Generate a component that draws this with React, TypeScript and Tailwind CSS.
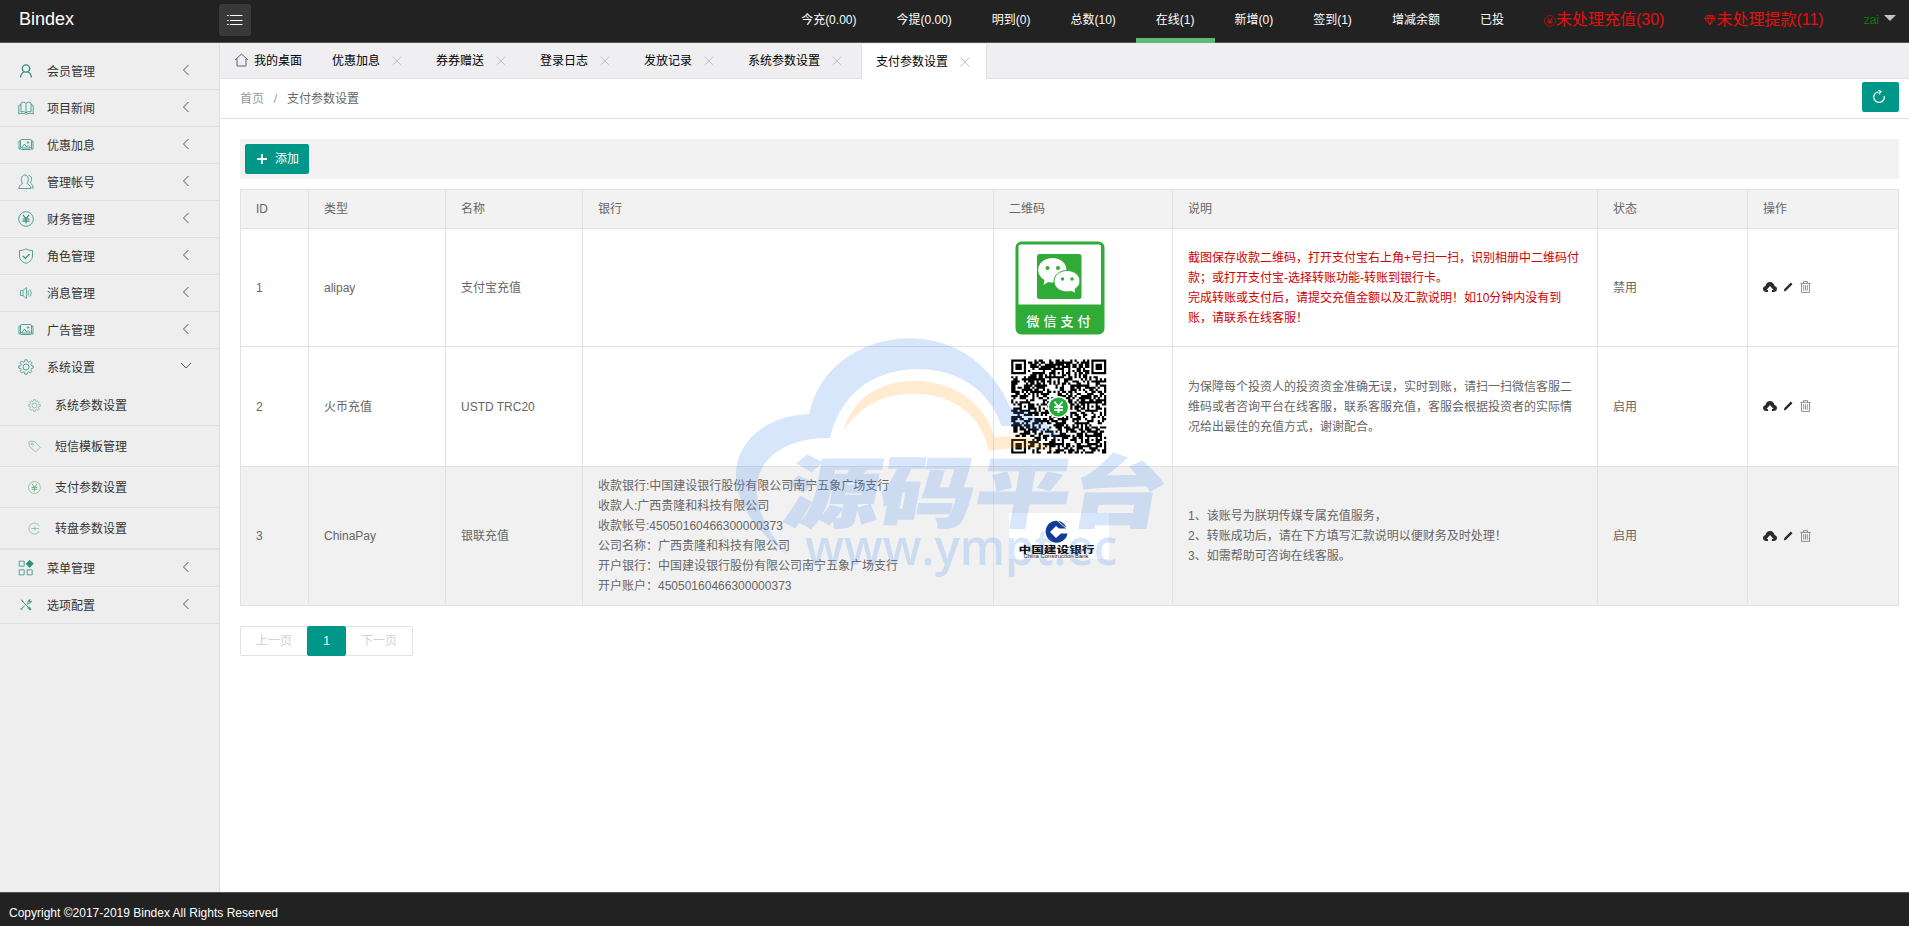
import type { ReactNode } from 'react';

const stats = [
    '今充(0.00)',
    '今提(0.00)',
    '明到(0)',
    '总数(10)',
    '在线(1)',
    '新增(0)',
    '签到(1)',
    '增减余额',
    '已投',
];

const gear = (
    <>
        <path d="M6.9.8h2.2l.4 1.9 1.2.5 1.7-1.1 1.5 1.5-1.1 1.7.5 1.2 1.9.4v2.2l-1.9.4-.5 1.2 1.1 1.7-1.5 1.5-1.7-1.1-1.2.5-.4 1.9H6.9l-.4-1.9-1.2-.5-1.7 1.1-1.5-1.5 1.1-1.7-.5-1.2-1.9-.4V6.9l1.9-.4.5-1.2-1.1-1.7 1.5-1.5 1.7 1.1 1.2-.5z" />
        <circle cx="8" cy="8" r="3" />
    </>
);

const picture = (
    <>
        <rect x="2.5" y="2.5" width="11" height="10" rx="1" />
        <path d="M2.5 4H1v8h1.500M13.500 4H15v8h-1.500M3.500 11l3-4 2 3 1.500-1.500 2.500 2.500z" />
        <circle cx="10" cy="5.500" r=".8" />
    </>
);

const yen = (
    <>
        <circle cx="8" cy="8" r="7.300" />
        <path d="M5 3.800l3 4 3-4M4.500 8h7M4.500 10.200h7M8 8v4.500" strokeWidth="1.200" />
    </>
);

const icons: Record<string, ReactNode> = {
    user: (
        <>
            <circle cx="8" cy="5.500" r="3.700" strokeWidth="1.300" />
            <path d="M2.500 14.500c.3-3 1.700-4.800 3.500-5.500M13.500 14.500c-.3-3-1.700-4.800-3.500-5.500" strokeWidth="1.300" />
        </>
    ),
    book: (
        <path d="M8 3.500v9.500M8 3.500C7 2 4 1.800 3 3v9c1.500-.8 4-.6 5 1 1-1.600 3.500-1.800 5-1V3c-1-1.200-4-1-5 .5M3 4.500L.8 5.500v8.500c2-1 5.500-.8 7.200.3 1.700-1.100 5.200-1.300 7.200-.3V5.500L13 4.500" />
    ),
    picture,
    group: (
        <>
            <path d="M4.500 9.200C2.500 7 3 1 6.800 1s4.500 6 2.300 8.200c0 1.200 3.900 1.600 3.900 5.300H.8c0-3.700 3.700-4.100 3.700-5.300z" />
            <path d="M10.500 1.500c3.300-.2 4 5 1.900 7.200 0 1.200 2.800 1.600 2.800 5.300h-1.500" />
        </>
    ),
    yen,
    shield: (
        <>
            <path d="M8 .8c2 1.300 4.200 1.700 6.500 1.700v5.500c0 3.500-2.500 6-6.500 7.300-4-1.300-6.500-3.800-6.500-7.300V2.500C3.800 2.500 6 2.100 8 .8z" />
            <path d="M4.800 7.800l2.500 2.500 4.200-4.300" strokeWidth="1.200" />
        </>
    ),
    sound: (
        <path d="M2.500 5.500h2.500l3.500-3v11l-3.500-3H2.500zM5 5.500v5M10.300 5.500v5M11.800 4.300c1.800 1.700 1.800 5.700 0 7.400" strokeWidth=".7" />
    ),
    gear,
    tag: (
        <>
            <path d="M1 2.500L2 1.500l6 .3 7 7.200-5.500 5.800L2 8z" />
            <circle cx="5" cy="5" r="1.300" />
        </>
    ),
    turn: (
        <path d="M14 5A6.800 6.800 0 1 0 14 11M4 8h9.500M8.500 5.500v5" />
    ),
    menu: (
        <>
            <path d="M1.200 1.200h5v5h-5zM1.200 9.800h5v5h-5zM9.200 9.800h5v5h-5z" />
            <path d="M11.700.2l3.600 3.600-3.600 3.600-3.600-3.600z" fill="currentColor" />
        </>
    ),
    tools: (
        <path
            d="M2.500 2.500l11 11M2 13.500l4.500-4.500M9 6.500l2-2c-.5-1.500.5-3 2.200-3l-1.200 1.700 1.200 1.200 1.600-1.200c0 1.800-1.400 2.800-3 2.300L10 7.500M2.500 1.500l2.500 3M1.500 12l2 2.500M10 11.500l3 3 1.500-1.500-3-3"
            transform="translate(1.500 1.500) scale(.8)"
            strokeWidth="1.200"
        />
    ),
};

function Icon({ name, className }: { name: string; className: string }) {
    return (
        <svg viewBox="0 0 16 16" className={className} fill="none" stroke="currentColor" strokeWidth="0.8">
            {icons[name]}
        </svg>
    );
}

const menu = [
    { icon: 'user', label: '会员管理' },
    { icon: 'book', label: '项目新闻' },
    { icon: 'picture', label: '优惠加息' },
    { icon: 'group', label: '管理帐号' },
    { icon: 'yen', label: '财务管理' },
    { icon: 'shield', label: '角色管理' },
    { icon: 'sound', label: '消息管理' },
    { icon: 'picture', label: '广告管理' },
    {
        icon: 'gear',
        label: '系统设置',
        children: [
            { icon: 'gear', label: '系统参数设置' },
            { icon: 'tag', label: '短信模板管理' },
            { icon: 'yen', label: '支付参数设置' },
            { icon: 'turn', label: '转盘参数设置' },
        ],
    },
    { icon: 'menu', label: '菜单管理' },
    { icon: 'tools', label: '选项配置' },
];

const tabs = ['优惠加息', '券券赠送', '登录日志', '发放记录', '系统参数设置', '支付参数设置'];

// Version 7 code: 45 x 45 modules
const SIZE = 45;

function buildQr() {
    const inFinder = (x: number, y: number) => {
        const spots = [[0, 0], [SIZE - 7, 0], [0, SIZE - 7]];
        for (const [fx, fy] of spots) {
            const dx = x - fx;
            const dy = y - fy;
            if (dx >= -1 && dx <= 7 && dy >= -1 && dy <= 7) {
                const ring = Math.max(Math.abs(dx - 3), Math.abs(dy - 3));
                return ring === 3 || ring <= 1;
            }
        }
        return null;
    };
    const inAlign = (x: number, y: number) => {
        for (const [ax, ay] of [[22, 6], [6, 22], [38, 22], [22, 38], [38, 38]]) {
            const ring = Math.max(Math.abs(x - ax), Math.abs(y - ay));
            if (ring <= 2) return ring !== 1;
        }
        return null;
    };
    let seed = 20190;
    let d = '';
    for (let y = 0; y < SIZE; y++) {
        for (let x = 0; x < SIZE; x++) {
            seed = (seed * 1103515245 + 12345) % 2147483648;
            const on = inFinder(x, y) ?? inAlign(x, y) ?? (seed >> 12) % 100 < 54;
            if (on) d += `M${x} ${y}h1.03v1.03h-1.03z`;
        }
    }
    return d;
}

const qrPath = buildQr();

function WechatPay() {
    return (
        <svg viewBox="0 0 100 98" className="block h-[98px] w-[100px]">
            <rect x="6.500" y="2.500" width="89" height="93" rx="6" fill="#31ab37" />
            <path d="M11.500 5.500H90a2 2 0 0 1 2 2V65.500H9.500V7.500a2 2 0 0 1 2-2z" fill="#fff" />
            <rect x="28" y="15" width="44.500" height="45" rx="2.500" fill="#31ab37" />
            <path d="M43.500 19c8 0 14 5.200 14 12s-6 12.500-14 12.500c-1.600 0-3-.2-4.300-.6L34.500 46l1-5c-3.700-2.300-6.300-5.800-6.300-10 0-6.800 6.300-12 14.300-12z" fill="#fff" />
            <path d="M58 31.500c7.300 0 13 4.600 13 10.500 0 3.400-2 6.300-5 8.200l.7 4.300-4.200-2.200c-1.400.4-2.900.6-4.500.6-7.300 0-13-4.700-13-10.700s5.700-10.700 13-10.700z" fill="#fff" stroke="#31ab37" strokeWidth="1" />
            <g fill="#31ab37">
                <circle cx="38.500" cy="29" r="2" />
                <circle cx="49" cy="29" r="2" />
                <circle cx="53.500" cy="40" r="1.700" />
                <circle cx="63" cy="40" r="1.700" />
            </g>
            <text x="17.500" y="86.500" textLength="64" fontSize="13" fontWeight="500" fill="#fff" fontFamily="'Noto Sans CJK SC', sans-serif">
                微信支付
            </text>
        </svg>
    );
}

function QrCode() {
    return (
        <svg viewBox="0 0 100 100" className="block size-[100px]">
            <path d={qrPath} transform="translate(2.200 2.500) scale(2.110 2.090)" fill="#000" />
            <circle cx="49.500" cy="50" r="11" fill="#fff" />
            <circle cx="49.500" cy="50" r="9.500" fill="#25ab37" />
            <path d="M45.500 44.800l4 5 4-5M45 50h9M45 53.200h9M49.500 50v6" stroke="#fff" strokeWidth="1.800" fill="none" />
        </svg>
    );
}

function BankLogo() {
    return (
        <svg viewBox="0 0 100 46" className="block h-[46px] w-[100px] bg-white">
            <path d="M51 8.200A11 11 0 1 0 58.500 20.500H52l-5 4.500-6-6 6-6 3 2.500h7.500a11 11 0 0 0-6.500-7.300z" fill="#123c98" />
            <path d="M48 7.500l9.500 8M53 8l5 5" stroke="#fff" strokeWidth=".9" />
            <text x="9.500" y="40" textLength="76" lengthAdjust="spacingAndGlyphs" fontSize="8.800" fontWeight="900" fill="#111" fontFamily="'Noto Sans CJK SC', sans-serif">
                中国建设银行
            </text>
            <text x="14.500" y="45" textLength="65" lengthAdjust="spacingAndGlyphs" fontSize="5.500" fill="#111" fontFamily="'Liberation Sans', sans-serif">
                China Construction Bank
            </text>
        </svg>
    );
}

const columns = [
    { title: 'ID', width: 'w-[68px]' },
    { title: '类型', width: 'w-[137px]' },
    { title: '名称', width: 'w-[137px]' },
    { title: '银行', width: 'w-[411px]' },
    { title: '二维码', width: 'w-[179px]' },
    { title: '说明', width: 'w-[425px]' },
    { title: '状态', width: 'w-[150px]' },
    { title: '操作', width: 'w-[151px]' },
];

const rows = [
    {
        id: 1,
        type: 'alipay',
        name: '支付宝充值',
        bank: [],
        code: <WechatPay />,
        note: [
            '截图保存收款二维码，打开支付宝右上角+号扫一扫，识别相册中二维码付',
            '款；或打开支付宝-选择转账功能-转账到银行卡。',
            '完成转账或支付后，请提交充值金额以及汇款说明！如10分钟内没有到',
            '账，请联系在线客服！',
        ],
        status: '禁用',
        height: 'h-[118px]',
        noteColor: 'text-[#d00000]',
    },
    {
        id: 2,
        type: '火币充值',
        name: 'USTD TRC20',
        bank: [],
        code: <QrCode />,
        note: [
            '为保障每个投资人的投资资金准确无误，实时到账，请扫一扫微信客服二',
            '维码或者咨询平台在线客服，联系客服充值，客服会根据投资者的实际情',
            '况给出最佳的充值方式，谢谢配合。',
        ],
        status: '启用',
        height: 'h-[120px]',
        noteColor: '',
    },
    {
        id: 3,
        type: 'ChinaPay',
        name: '银联充值',
        bank: [
            '收款银行:中国建设银行股份有限公司南宁五象广场支行',
            '收款人:广西贵隆和科技有限公司',
            '收款帐号:45050160466300000373',
            '公司名称：广西贵隆和科技有限公司',
            '开户银行：中国建设银行股份有限公司南宁五象广场支行',
            '开户账户：45050160466300000373',
        ],
        code: <BankLogo />,
        note: [
            '1、该账号为朕玥传媒专属充值服务，',
            '2、转账成功后，请在下方填写汇款说明以便财务及时处理！',
            '3、如需帮助可咨询在线客服。',
        ],
        status: '启用',
        height: 'h-[139px]',
        noteColor: '',
        active: true,
    },
];

function Lines({ items }: { items: string[] }) {
    return (
        <>
            {items.map((line) => (
                <p key={line} className="whitespace-nowrap">{line}</p>
            ))}
        </>
    );
}

function Actions() {
    return (
        <div className="mb-px flex items-center">
            <svg viewBox="0 0 14 10" className="h-[10px] w-[14px]" fill="#2b2b2b">
                <path d="M3.500 10C1.500 10 0 8.800 0 7c0-1.500 1-2.700 2.500-3C2.800 1.700 4.500 0 7 0s4.200 1.700 4.500 4C13 4.300 14 5.500 14 7c0 1.800-1.500 3-3.500 3H8.900V8h1.600L7 4 3.500 8H5v2z" />
            </svg>
            <svg viewBox="0 0 10 10" className="ml-[6px] size-[10px]">
                <path d="M.8 9.400l.6-2.400L7.800.6l1.700 1.600L3 8.700z" fill="#2b2b2b" />
            </svg>
            <svg viewBox="0 0 11 12" className="ml-[7px] h-[12px] w-[11px]" fill="none" stroke="#777" strokeWidth=".8">
                <path d="M.3 2.400h10.400M3.500 2.400V.6h4v1.800M1.500 2.400v9h8v-9M3.700 4.200v5.300M5.500 4.200v5.300M7.300 4.200v5.300" />
            </svg>
        </div>
    );
}

function Watermark() {
    return (
        <svg viewBox="0 0 1500 870" className="pointer-events-none absolute top-[320px] left-[700px] h-[290px] w-[500px] opacity-20">
            <path
                d="M265 705C150 620 108 540 108 460 112 355 210 285 328 282 355 145 480 55 632 55 770 56 880 140 930 262 985 272 1050 310 1088 368 1040 335 975 318 904 317 870 215 780 147 650 147 515 150 420 225 390 354 270 352 178 405 170 500 168 570 205 640 265 705z"
                fill="#4285f4"
            />
            <path
                d="M431 331C455 240 535 184 640 182 765 184 855 250 884 352 950 343 1020 355 1062 392 1000 380 930 382 866 393 845 285 760 221 640 221 545 221 480 260 431 331z"
                fill="#ff9e14"
            />
            <g fill="#4285f4" stroke="#4285f4">
                <text
                    transform="translate(242 602) skewX(-10)"
                    textLength="1142"
                    lengthAdjust="spacingAndGlyphs"
                    fontSize="232"
                    fontWeight="900"
                    strokeWidth="4"
                    fontFamily="'Noto Sans CJK SC', sans-serif"
                >
                    源码平台
                </text>
                <text x="316" y="735" textLength="936" lengthAdjust="spacingAndGlyphs" fontSize="150" fontWeight="600" strokeWidth="0" fontFamily="'Open Sans', sans-serif">
                    www.ympt.ec
                </text>
            </g>
        </svg>
    );
}

function Header() {
    return (
        <header className="flex h-[43px] shrink-0 border-b border-[#555] bg-[#222] text-white">
            <div className="w-[219px] pt-[5px] pl-[19px] text-[18px] leading-[28px]">Bindex</div>
            <button className="mt-[4px] flex size-[32px] items-center justify-center rounded-[3px] bg-[#393939]">
                <svg viewBox="0 0 16 12" className="mb-px h-[12px] w-[16px]" fill="none" stroke="#fff" strokeWidth="1">
                    <path d="M0 1.500h1.800M0 6.500h1.800M0 10.500h1.800M3 1.500h12.500M3 6.500h12.500M3 10.500h12.500" />
                </svg>
            </button>
            <nav className="ml-auto flex h-[43px] pr-[13px] text-[12px] leading-[40px]">
                {stats.map((label) => (
                    <a
                        key={label}
                        className={`h-[43px] px-5 ${label === '在线(1)' ? 'border-b-[5px] border-[#5fb878]' : ''}`}
                    >
                        {label}
                    </a>
                ))}
                <a className="flex items-center px-5 pb-[3px] text-[16px] text-[#e60f0f]">
                    <Icon name="yen" className="mt-px size-[12px]" />
                    未处理充值(30)
                </a>
                <a className="flex items-center px-5 pb-[3px] text-[16px] text-[#e60f0f]">
                    <svg viewBox="0 0 12 12" className="size-[12px]" fill="none" stroke="currentColor" strokeWidth=".9">
                        <path d="M3 1.500h6L11.500 4.500 6 10.800.5 4.500zM.5 4.500h11M3.500 4.500L6 10.500l2.500-6M3 1.500l1.500 3L6 1.500l1.500 3L9 1.500" />
                    </svg>
                    未处理提款(11)
                </a>
                <a className="flex items-center gap-[5px] pb-[3px] pl-5 text-[#0a7a0a]">
                    zai
                    <svg viewBox="0 0 12 6" className="mb-[4px] h-[6px] w-[12px]">
                        <path d="M0 0h12L6 6z" fill="#c2c2c2" />
                    </svg>
                </a>
            </nav>
        </header>
    );
}

function Sidebar() {
    return (
        <aside className="w-[220px] shrink-0 border-r border-[#dfdfdf] bg-[#eee] pt-[10px] text-[12px] text-[#333]">
            {menu.map((item) => (
                <div key={item.label} className="border-b border-[#e0e0e0]">
                    <div className="flex h-[36px] items-center pr-[28px] pl-[18px]">
                        <Icon name={item.icon} className="size-[16px] text-[#2f8f7f]" />
                        <span className="ml-[13px] pt-[2px]">{item.label}</span>
                        <svg viewBox="0 0 12 12" className="mr-[-1px] mb-[2px] ml-auto size-[12px]" fill="none" stroke="#555" strokeWidth="1">
                            <path d={item.children ? 'M1 3l5 5 5-5' : 'M8.500 1l-5 5 5 5'} />
                        </svg>
                    </div>
                    {item.children?.map((child) => (
                        <div key={child.label} className="flex h-[41px] items-center border-b border-[#e0e0e0] pl-[28px]">
                            <Icon name={child.icon} className="mt-px size-[13px] text-[#6fae8c]" />
                            <span className="ml-[14px] pt-[2px]">{child.label}</span>
                        </div>
                    ))}
                </div>
            ))}
        </aside>
    );
}

function TabBar() {
    return (
        <div className="flex h-[36px] border-b border-[#e2e2e2] bg-[#efeef0] text-[12px] text-black">
            <div className="flex w-[97px] items-center pl-[14px]">
                <svg viewBox="0 0 14 14" className="mb-px h-[14px] w-[15px]" fill="none" stroke="#555" strokeWidth=".9">
                    <path d="M.5 7L7 1l6.500 6M2.500 5.500v7.500h9V5.500" />
                </svg>
                <span className="ml-[5px]">我的桌面</span>
            </div>
            {tabs.map((tab, i) => (
                <div
                    key={tab}
                    className={`flex items-center ${
                        i === tabs.length - 1
                            ? 'mt-px h-[35px] border-x border-[#e2e2e2] bg-white pr-[16px] pl-[14px]'
                            : 'pr-[19px] pl-[15px]'
                    }`}
                >
                    {tab}
                    <svg viewBox="0 0 10 10" className="ml-[12px] size-[10px]" stroke="#c2c2c2" strokeWidth="1">
                        <path d="M.5.5l9 9M9.500.5l-9 9" />
                    </svg>
                </div>
            ))}
        </div>
    );
}

function PaymentTable() {
    return (
        <table className="mt-[10px] w-[1659px] table-fixed border-separate border-spacing-0 border-t border-l border-[#e2e2e2] text-left leading-[20px]">
            <thead>
                <tr className="h-[39px] bg-[#f2f2f2]">
                    {columns.map((col) => (
                        <th key={col.title} className={`border-r border-b border-[#e2e2e2] px-[15px] py-0 font-normal ${col.width}`}>
                            {col.title}
                        </th>
                    ))}
                </tr>
            </thead>
            <tbody>
                {rows.map((row) => (
                    <tr
                        key={row.id}
                        className={`${row.height} ${row.active ? 'bg-[#f1f1f1]' : 'bg-white'} *:border-r *:border-b *:border-[#e2e2e2] *:px-[15px] *:py-0`}
                    >
                        <td>{row.id}</td>
                        <td>{row.type}</td>
                        <td>{row.name}</td>
                        <td><Lines items={row.bank} /></td>
                        <td>{row.code}</td>
                        <td className={row.noteColor}><Lines items={row.note} /></td>
                        <td>{row.status}</td>
                        <td><Actions /></td>
                    </tr>
                ))}
            </tbody>
        </table>
    );
}

export default function App() {
    return (
        <div className="relative flex h-[926px] flex-col overflow-hidden bg-white font-['Liberation_Sans','Noto_Sans_CJK_SC',sans-serif]">
            <Header />
            <div className="flex min-h-0 flex-1">
                <Sidebar />
                <main className="min-w-0 flex-1 text-[12px] text-[#666]">
                    <TabBar />
                    <div className="flex h-[40px] items-center justify-between border-b border-[#e2e2e2] pr-[10px] pl-[20px]">
                        <div className="flex">
                            <span className="text-[#999]">首页</span>
                            <span className="w-[23px] text-center text-[#999]">/</span>
                            <span>支付参数设置</span>
                        </div>
                        <button className="mt-[-3px] flex h-[30px] w-[37px] items-center justify-center rounded-[2px] bg-[#009688] pr-[3px]">
                            <svg viewBox="0 0 14 14" className="size-[14px]" fill="none" stroke="#fff" strokeWidth="1.300">
                                <path d="M6.500 1.800A5.300 5.300 0 1 0 12.200 6M6.300 0L9 1.700 6.800 4" />
                            </svg>
                        </button>
                    </div>
                    <div className="px-[20px] pt-[20px]">
                        <div className="flex h-[40px] w-[1659px] items-center bg-[#f2f2f2] pl-[5px]">
                            <button className="flex h-[30px] w-[64px] items-center rounded-[2px] bg-[#009688] pl-[12px] text-white">
                                <svg viewBox="0 0 10 10" className="size-[10px]" stroke="#fff" strokeWidth="1.800">
                                    <path d="M5 0v10M0 5h10" />
                                </svg>
                                <span className="ml-[8px]">添加</span>
                            </button>
                        </div>
                        <PaymentTable />
                        <div className="mt-[20px] flex h-[30px] text-center leading-[28px] text-[#d2d2d2]">
                            <span className="w-[67px] rounded-l-[2px] border border-r-0 border-[#e2e2e2]">上一页</span>
                            <span className="w-[39px] rounded-[2px] bg-[#009688] leading-[30px] text-white">1</span>
                            <span className="w-[67px] rounded-r-[2px] border border-l-0 border-[#e2e2e2]">下一页</span>
                        </div>
                    </div>
                </main>
            </div>
            <footer className="h-[34px] shrink-0 border-t border-[#555] bg-[#222] pl-[9px] text-[12px] leading-[40px] text-white">
                Copyright ©2017-2019 Bindex All Rights Reserved
            </footer>
            <Watermark />
        </div>
    );
}
